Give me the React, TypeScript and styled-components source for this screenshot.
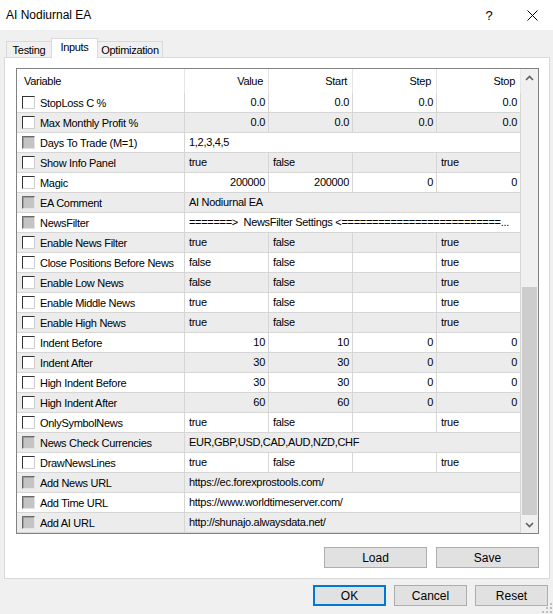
import React from 'react';
import styled, { createGlobalStyle } from 'styled-components';

const GlobalStyle = createGlobalStyle`
  html, body { margin: 0; padding: 0; background: #f0f0f0; }
  body { font-family: "Liberation Sans", Arial, sans-serif; color: #000; }
  * { box-sizing: border-box; }
`;

type Kind = 'num' | 'bool' | 'str';
interface RowData {
  name: string;
  kind: Kind;
  vals?: string[];
  text?: string;
  disabled?: boolean;
}

const rows: RowData[] = [
  { name: 'StopLoss C %', kind: 'num', vals: ['0.0', '0.0', '0.0', '0.0'] },
  { name: 'Max Monthly Profit %', kind: 'num', vals: ['0.0', '0.0', '0.0', '0.0'] },
  { name: 'Days To Trade (M=1)', kind: 'str', text: '1,2,3,4,5', disabled: true },
  { name: 'Show Info Panel', kind: 'bool', vals: ['true', 'false', '', 'true'] },
  { name: 'Magic', kind: 'num', vals: ['200000', '200000', '0', '0'] },
  { name: 'EA Comment', kind: 'str', text: 'AI Nodiurnal EA', disabled: true },
  {
    name: 'NewsFilter',
    kind: 'str',
    text: '=======>  NewsFilter Settings <==========================...',
    disabled: true,
  },
  { name: 'Enable News Filter', kind: 'bool', vals: ['true', 'false', '', 'true'] },
  { name: 'Close Positions Before News', kind: 'bool', vals: ['false', 'false', '', 'true'] },
  { name: 'Enable Low News', kind: 'bool', vals: ['false', 'false', '', 'true'] },
  { name: 'Enable Middle News', kind: 'bool', vals: ['true', 'false', '', 'true'] },
  { name: 'Enable High News', kind: 'bool', vals: ['true', 'false', '', 'true'] },
  { name: 'Indent Before', kind: 'num', vals: ['10', '10', '0', '0'] },
  { name: 'Indent After', kind: 'num', vals: ['30', '30', '0', '0'] },
  { name: 'High Indent Before', kind: 'num', vals: ['30', '30', '0', '0'] },
  { name: 'High Indent After', kind: 'num', vals: ['60', '60', '0', '0'] },
  { name: 'OnlySymbolNews', kind: 'bool', vals: ['true', 'false', '', 'true'] },
  { name: 'News Check Currencies', kind: 'str', text: 'EUR,GBP,USD,CAD,AUD,NZD,CHF', disabled: true },
  { name: 'DrawNewsLines', kind: 'bool', vals: ['true', 'false', '', 'true'] },
  { name: 'Add News URL', kind: 'str', text: 'https://ec.forexprostools.com/', disabled: true },
  { name: 'Add Time URL', kind: 'str', text: 'https://www.worldtimeserver.com/', disabled: true },
  { name: 'Add AI URL', kind: 'str', text: 'http://shunajo.alwaysdata.net/', disabled: true },
];

const Window = styled.div`
  position: relative;
  width: 553px;
  height: 614px;
  display: flex;
  flex-direction: column;
  background: #f0f0f0;
  overflow: hidden;
`;

const TitleBar = styled.div`
  height: 30px;
  flex: none;
  background: #fff;
  display: flex;
  align-items: center;
  padding-left: 6px;
`;

const TitleText = styled.div`
  flex: 1;
  font-size: 12px;
  color: #000;
`;

const CaptionButton = styled.div<{ $w: number }>`
  width: ${(p) => p.$w}px;
  height: 30px;
  display: flex;
  align-items: center;
  justify-content: center;
  font-size: 13px;
  color: #000;
`;

const Body = styled.div`
  flex: 1;
  display: flex;
  flex-direction: column;
  padding: 8px 3px 0 4px;
`;

const TabStrip = styled.div`
  display: flex;
  align-items: flex-end;
  height: 19px;
  padding-left: 2px;
  position: relative;
  z-index: 1;
`;

const Tab = styled.div<{ $active?: boolean; $w: number }>`
  width: ${(p) => p.$w}px;
  height: ${(p) => (p.$active ? 20 : 16)}px;
  margin-bottom: ${(p) => (p.$active ? -1 : 0)}px;
  margin-left: ${(p) => (p.$active ? -1 : 0)}px;
  margin-right: ${(p) => (p.$active ? -1 : 0)}px;
  background: ${(p) => (p.$active ? '#fff' : '#f0f0f0')};
  border: 1px solid #d9d9d9;
  border-bottom: none;
  font-size: 11px;
  letter-spacing: -0.3px;
  display: flex;
  align-items: center;
  justify-content: center;
  padding-bottom: ${(p) => (p.$active ? 3 : 0)}px;
  position: relative;
  z-index: ${(p) => (p.$active ? 2 : 1)};
`;

const Panel = styled.div`
  height: 522px;
  flex: none;
  border: 1px solid #d9d9d9;
  background: #fff;
  padding: 10px 0 0 11px;
  display: flex;
  flex-direction: column;
`;

const List = styled.div`
  width: 523px;
  height: 466px;
  border: 1px solid #828282;
  background: #fff;
  display: flex;
`;

const Grid = styled.div`
  width: 504px;
  display: flex;
  flex-direction: column;
`;

const columns = '168px 84px 84px 84px 84px';

const HeaderRow = styled.div`
  display: grid;
  grid-template-columns: ${columns};
  height: 24px;
`;

const HeaderCell = styled.div<{ $right?: boolean }>`
  display: flex;
  align-items: center;
  justify-content: ${(p) => (p.$right ? 'flex-end' : 'flex-start')};
  padding: 0 5px 1px 7px;
  border-right: 1px solid #e5e5e5;
  font-size: 11px;
  letter-spacing: -0.3px;
  white-space: nowrap;
`;

const Row = styled.div<{ $alt: boolean }>`
  display: grid;
  grid-template-columns: ${columns};
  height: 20px;
  border-bottom: 1px solid #d6d6d6;
  background: ${(p) => (p.$alt ? '#ececec' : '#fff')};
`;

const NameCell = styled.div`
  display: flex;
  align-items: center;
  padding-left: 5px;
  border-right: 1px solid #d6d6d6;
  font-size: 11px;
  letter-spacing: -0.3px;
  white-space: nowrap;
  overflow: hidden;
`;

const Check = styled.span<{ $disabled?: boolean }>`
  width: 13px;
  height: 13px;
  flex: none;
  margin-right: 5px;
  background: ${(p) => (p.$disabled ? '#c4c4c4' : '#fff')};
  border-top: 1px solid ${(p) => (p.$disabled ? '#6a6a6a' : '#333')};
  border-left: 1px solid ${(p) => (p.$disabled ? '#6a6a6a' : '#333')};
  border-right: 1px solid ${(p) => (p.$disabled ? '#e3e3e3' : '#cfcfcf')};
  border-bottom: 1px solid ${(p) => (p.$disabled ? '#e3e3e3' : '#cfcfcf')};
  box-shadow: inset 1px 1px 0 ${(p) => (p.$disabled ? '#a0a0a0' : '#fff')};
`;

const ValueCell = styled.div<{ $right?: boolean; $span?: number }>`
  grid-column: span ${(p) => p.$span ?? 1};
  border-right: 1px solid #d6d6d6;
  padding: ${(p) => (p.$right ? '0 3px 0 4px' : '0 4px 0 4px')};
  text-align: ${(p) => (p.$right ? 'right' : 'left')};
  font-size: 11px;
  letter-spacing: -0.3px;
  line-height: 19px;
  white-space: pre;
  overflow: hidden;
`;

const Scrollbar = styled.div`
  width: 17px;
  background: #f0f0f0;
  display: flex;
  flex-direction: column;
`;

const ArrowBox = styled.div`
  height: 17px;
  flex: none;
  display: flex;
  align-items: center;
  justify-content: center;
`;

const Track = styled.div`
  flex: 1;
  display: flex;
  flex-direction: column;
`;

const Thumb = styled.div<{ $top: number; $h: number }>`
  margin-top: ${(p) => p.$top}px;
  height: ${(p) => p.$h}px;
  margin-left: 1px;
  margin-right: 1px;
  background: #cdcdcd;
`;

const ButtonRow = styled.div<{ $gap: number }>`
  display: flex;
  justify-content: flex-end;
  gap: ${(p) => p.$gap}px;
`;

const PanelButtons = styled(ButtonRow)`
  width: 523px;
  margin-top: 13px;
`;

const Footer = styled(ButtonRow)`
  margin-top: 6px;
  padding-right: 2px;
`;

const PushButton = styled.div<{ $w: number; $default?: boolean }>`
  width: ${(p) => p.$w}px;
  height: 21px;
  background: #e1e1e1;
  border: ${(p) => (p.$default ? '2px solid #0078d7' : '1px solid #adadad')};
  display: flex;
  align-items: center;
  justify-content: center;
  font-size: 12px;
  color: #000;
`;

const Grip = styled.svg`
  position: absolute;
  right: 1px;
  bottom: 1px;
`;

const Chevron = ({ up }: { up?: boolean }) => (
  <svg width="9" height="6" viewBox="0 0 9 6">
    <path
      d={up ? 'M1 5 L4.5 1.5 L8 5' : 'M1 1 L4.5 4.5 L8 1'}
      fill="none"
      stroke="#606060"
      strokeWidth="1.6"
    />
  </svg>
);

const DataRow = ({ row, alt }: { row: RowData; alt: boolean }) => (
  <Row $alt={alt}>
    <NameCell>
      <Check $disabled={row.disabled} />
      {row.name}
    </NameCell>
    {row.kind === 'str' ? (
      <ValueCell $span={4}>{row.text}</ValueCell>
    ) : (
      row.vals!.map((v, i) => (
        <ValueCell key={i} $right={row.kind === 'num'}>
          {v}
        </ValueCell>
      ))
    )}
  </Row>
);

export default function App() {
  return (
    <>
      <GlobalStyle />
      <Window>
        <TitleBar>
          <TitleText>AI Nodiurnal EA</TitleText>
          <CaptionButton $w={46}>?</CaptionButton>
          <CaptionButton $w={41}>
            <svg width="11" height="11" viewBox="0 0 11 11">
              <path d="M0.5 0.5 L10.5 10.5 M10.5 0.5 L0.5 10.5" stroke="#000" strokeWidth="1" />
            </svg>
          </CaptionButton>
        </TitleBar>
        <Body>
          <TabStrip>
            <Tab $w={46}>Testing</Tab>
            <Tab $w={47} $active>
              Inputs
            </Tab>
            <Tab $w={66}>Optimization</Tab>
          </TabStrip>
          <Panel>
            <List>
              <Grid>
                <HeaderRow>
                  <HeaderCell>Variable</HeaderCell>
                  <HeaderCell $right>Value</HeaderCell>
                  <HeaderCell $right>Start</HeaderCell>
                  <HeaderCell $right>Step</HeaderCell>
                  <HeaderCell $right>Stop</HeaderCell>
                </HeaderRow>
                {rows.map((r, i) => (
                  <DataRow key={r.name} row={r} alt={i % 2 === 1} />
                ))}
              </Grid>
              <Scrollbar>
                <ArrowBox>
                  <Chevron up />
                </ArrowBox>
                <Track>
                  <Thumb $top={201} $h={228} />
                </Track>
                <ArrowBox>
                  <Chevron />
                </ArrowBox>
              </Scrollbar>
            </List>
            <PanelButtons $gap={9}>
              <PushButton $w={103}>Load</PushButton>
              <PushButton $w={103}>Save</PushButton>
            </PanelButtons>
          </Panel>
          <Footer $gap={8}>
            <PushButton $w={73} $default>
              OK
            </PushButton>
            <PushButton $w={73}>Cancel</PushButton>
            <PushButton $w={73}>Reset</PushButton>
          </Footer>
        </Body>
        <Grip width="10" height="10" viewBox="0 0 10 10">
          <rect x="8" y="0" width="2" height="2" fill="#bfbfbf" />
          <rect x="8" y="4" width="2" height="2" fill="#bfbfbf" />
          <rect x="4" y="4" width="2" height="2" fill="#bfbfbf" />
          <rect x="8" y="8" width="2" height="2" fill="#bfbfbf" />
          <rect x="4" y="8" width="2" height="2" fill="#bfbfbf" />
          <rect x="0" y="8" width="2" height="2" fill="#bfbfbf" />
        </Grip>
      </Window>
    </>
  );
}
